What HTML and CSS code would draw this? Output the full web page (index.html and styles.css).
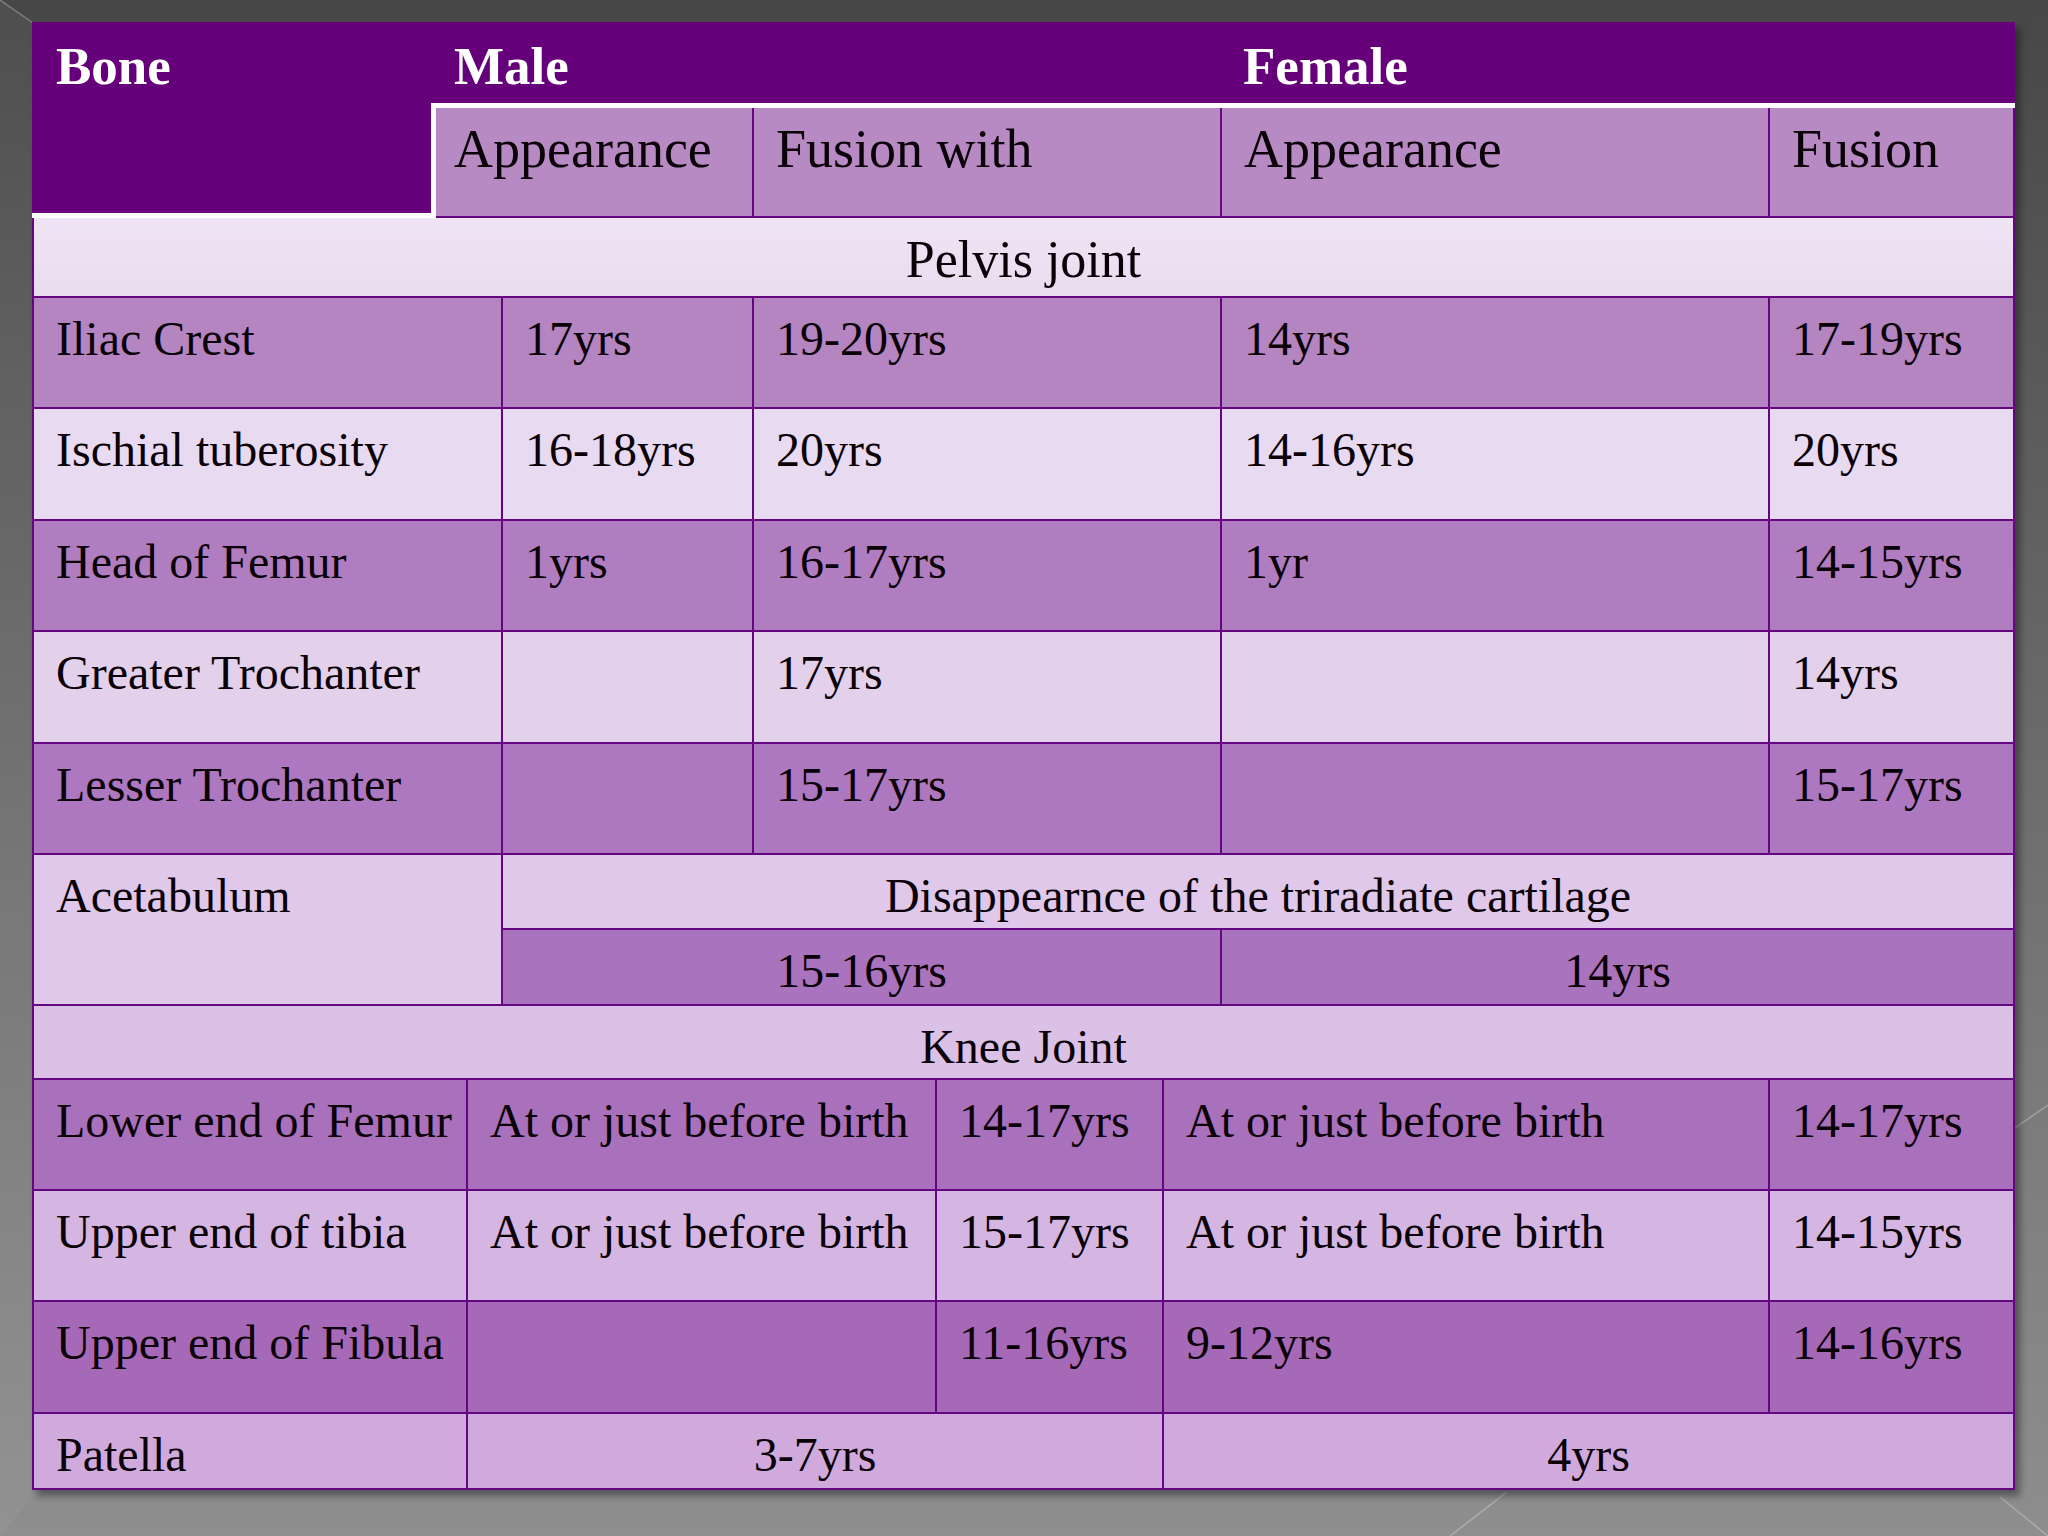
FILE: index.html
```html
<!DOCTYPE html>
<html lang="en">
<head>
<meta charset="utf-8">
<title>Bone ossification table</title>
<link rel="stylesheet" href="styles.css">
</head>
<body>
<div class="slide">
  <svg class="frame" width="2048" height="1536" viewBox="0 0 2048 1536" aria-hidden="true">
    <polygon points="0,0 32,22 32,1497 0,1536" fill="rgba(255,255,255,0.045)"/>
    <line x1="0" y1="0" x2="33" y2="23" stroke="rgba(255,255,255,0.28)" stroke-width="1.5"/>
    <line x1="2000" y1="1497" x2="2048" y2="1536" stroke="rgba(255,255,255,0.28)" stroke-width="1.5"/>
    <line x1="2015" y1="1128" x2="2048" y2="1105" stroke="rgba(255,255,255,0.28)" stroke-width="1.5"/>
    <line x1="1507" y1="1492" x2="1450" y2="1536" stroke="rgba(255,255,255,0.28)" stroke-width="1.5"/>
  </svg>

  <div class="table">
    <div class="head">
      <div class="h-bone">Bone</div>
      <div class="h-right">
        <div class="h-top">
          <div class="h-male">Male</div>
          <div class="h-female">Female</div>
        </div>
        <div class="h-sub">
          <div class="c">Appearance</div>
          <div class="c">Fusion with</div>
          <div class="c">Appearance</div>
          <div class="c">Fusion</div>
        </div>
      </div>
    </div>

    <div class="row section sec-pelvis"><div class="c center big">Pelvis joint</div></div>

    <div class="row pelvis h111 bg-iliac">
      <div class="c">Iliac Crest</div><div class="c">17yrs</div><div class="c">19-20yrs</div><div class="c">14yrs</div><div class="c">17-19yrs</div>
    </div>
    <div class="row pelvis h112 bg-ischial">
      <div class="c">Ischial tuberosity</div><div class="c">16-18yrs</div><div class="c">20yrs</div><div class="c">14-16yrs</div><div class="c">20yrs</div>
    </div>
    <div class="row pelvis h111 bg-head">
      <div class="c">Head of Femur</div><div class="c">1yrs</div><div class="c">16-17yrs</div><div class="c">1yr</div><div class="c">14-15yrs</div>
    </div>
    <div class="row pelvis h112 bg-greater">
      <div class="c">Greater Trochanter</div><div class="c"></div><div class="c">17yrs</div><div class="c"></div><div class="c">14yrs</div>
    </div>
    <div class="row pelvis h111 bg-lesser">
      <div class="c">Lesser Trochanter</div><div class="c"></div><div class="c">15-17yrs</div><div class="c"></div><div class="c">15-17yrs</div>
    </div>

    <div class="row acet">
      <div class="c acet-name">Acetabulum</div>
      <div class="acet-right">
        <div class="c center acet-top">Disappearnce of the triradiate cartilage</div>
        <div class="acet-bottom">
          <div class="c center">15-16yrs</div>
          <div class="c center">14yrs</div>
        </div>
      </div>
    </div>

    <div class="row section sec-knee"><div class="c center">Knee Joint</div></div>

    <div class="row knee h111 bg-lower">
      <div class="c">Lower end of Femur</div><div class="c">At or just before birth</div><div class="c">14-17yrs</div><div class="c">At or just before birth</div><div class="c">14-17yrs</div>
    </div>
    <div class="row knee h111 bg-tibia">
      <div class="c">Upper end of tibia</div><div class="c">At or just before birth</div><div class="c">15-17yrs</div><div class="c">At or just before birth</div><div class="c">14-15yrs</div>
    </div>
    <div class="row knee h112 bg-fibula">
      <div class="c">Upper end of Fibula</div><div class="c"></div><div class="c">11-16yrs</div><div class="c">9-12yrs</div><div class="c">14-16yrs</div>
    </div>
    <div class="row patella bg-patella">
      <div class="c">Patella</div><div class="c center">3-7yrs</div><div class="c center">4yrs</div>
    </div>
  </div>
</div>
</body>
</html>
```

FILE: styles.css
```css
* {
  box-sizing: border-box;
}

html, body {
  margin: 0;
  padding: 0;
}

body {
  width: 2048px;
  height: 1536px;
  overflow: hidden;
  font-family: "Liberation Serif", "DejaVu Serif", serif;
  color: #0a0008;
}

.slide {
  position: relative;
  width: 2048px;
  height: 1536px;
  padding: 22px 0 0 32px;
  background: linear-gradient(180deg, #474747 0%, #5a5a5a 25%, #737373 60%, #8e8e8e 100%);
}

.frame {
  position: absolute;
  left: 0;
  top: 0;
  z-index: 0;
}

.table {
  position: relative;
  z-index: 1;
  width: 1983px;
  display: flex;
  flex-direction: column;
  box-shadow: 5px 6px 7px rgba(0, 0, 0, 0.38);
}

/* ---------- header ---------- */
.head {
  display: grid;
  grid-template-columns: 399px 1fr;
  height: 196px;
  background: #ffffff;
}

.h-bone {
  height: 191px;
  background: #65007a;
  color: #ffffff;
  font-weight: bold;
  font-size: 53px;
  line-height: 1.2;
  padding: 13px 0 0 24px;
}

.h-right {
  display: flex;
  flex-direction: column;
}

.h-top {
  display: grid;
  grid-template-columns: 789px 1fr;
  height: 81px;
  margin-bottom: 5px;
  background: #65007a;
  color: #ffffff;
  font-weight: bold;
  font-size: 53px;
  line-height: 1.2;
}

.h-male,
.h-female {
  padding: 13px 0 0 23px;
}

.h-sub {
  display: grid;
  grid-template-columns: 316px 468px 548px 1fr;
  height: 110px;
  margin-left: 5px;
  background: #b78ac4;
  border-right: 2px solid #650582;
  border-bottom: 2px solid #650582;
  font-size: 54px;
  line-height: 1.2;
}

.h-sub .c {
  padding: 9px 0 0 18px;
}

.h-sub .c + .c {
  padding-left: 22px;
}

/* ---------- generic rows ---------- */
.row {
  display: grid;
  border-style: solid;
  border-color: #650582;
  border-width: 0 2px 2px 2px;
  font-size: 48px;
  line-height: 1.2;
}

.c {
  padding: 12px 10px 0 22px;
  white-space: nowrap;
}

.c + .c {
  border-left: 2px solid #650582;
}

.center {
  text-align: center;
  padding-left: 0;
  padding-right: 0;
}

.big {
  font-size: 52px;
  padding-top: 11px;
}

.h111 { height: 111px; }
.h112 { height: 112px; }

.section {
  grid-template-columns: 1fr;
}

.sec-pelvis {
  height: 80px;
  background: linear-gradient(180deg, #efe4f4 0%, #e9dcf0 100%);
}

.sec-knee {
  height: 74px;
  background: #dbc1e6;
}

.pelvis {
  grid-template-columns: 467px 251px 468px 548px 1fr;
}

.knee {
  grid-template-columns: 432px 469px 227px 606px 1fr;
}

.patella {
  grid-template-columns: 432px 696px 1fr;
  height: 76px;
}

.bg-iliac   { background: #b485c1; }
.bg-ischial { background: #e8daf0; }
.bg-head    { background: #b07ec0; }
.bg-greater { background: #e3d1ec; }
.bg-lesser  { background: #ad78bf; }
.bg-lower   { background: #a970bb; }
.bg-tibia   { background: #d5b6e2; }
.bg-fibula  { background: #a669b8; }
.bg-patella { background: #d0aadd; }

/* ---------- acetabulum ---------- */
.acet {
  grid-template-columns: 467px 1fr;
  height: 151px;
  background: #dfc8ea;
}

.acet-right {
  display: flex;
  flex-direction: column;
  border-left: 2px solid #650582;
}

.acet-top {
  height: 75px;
  border-bottom: 2px solid #650582;
}

.acet-bottom {
  flex: 1;
  display: grid;
  grid-template-columns: 717px 1fr;
  background: #aa73bd;
}
```
